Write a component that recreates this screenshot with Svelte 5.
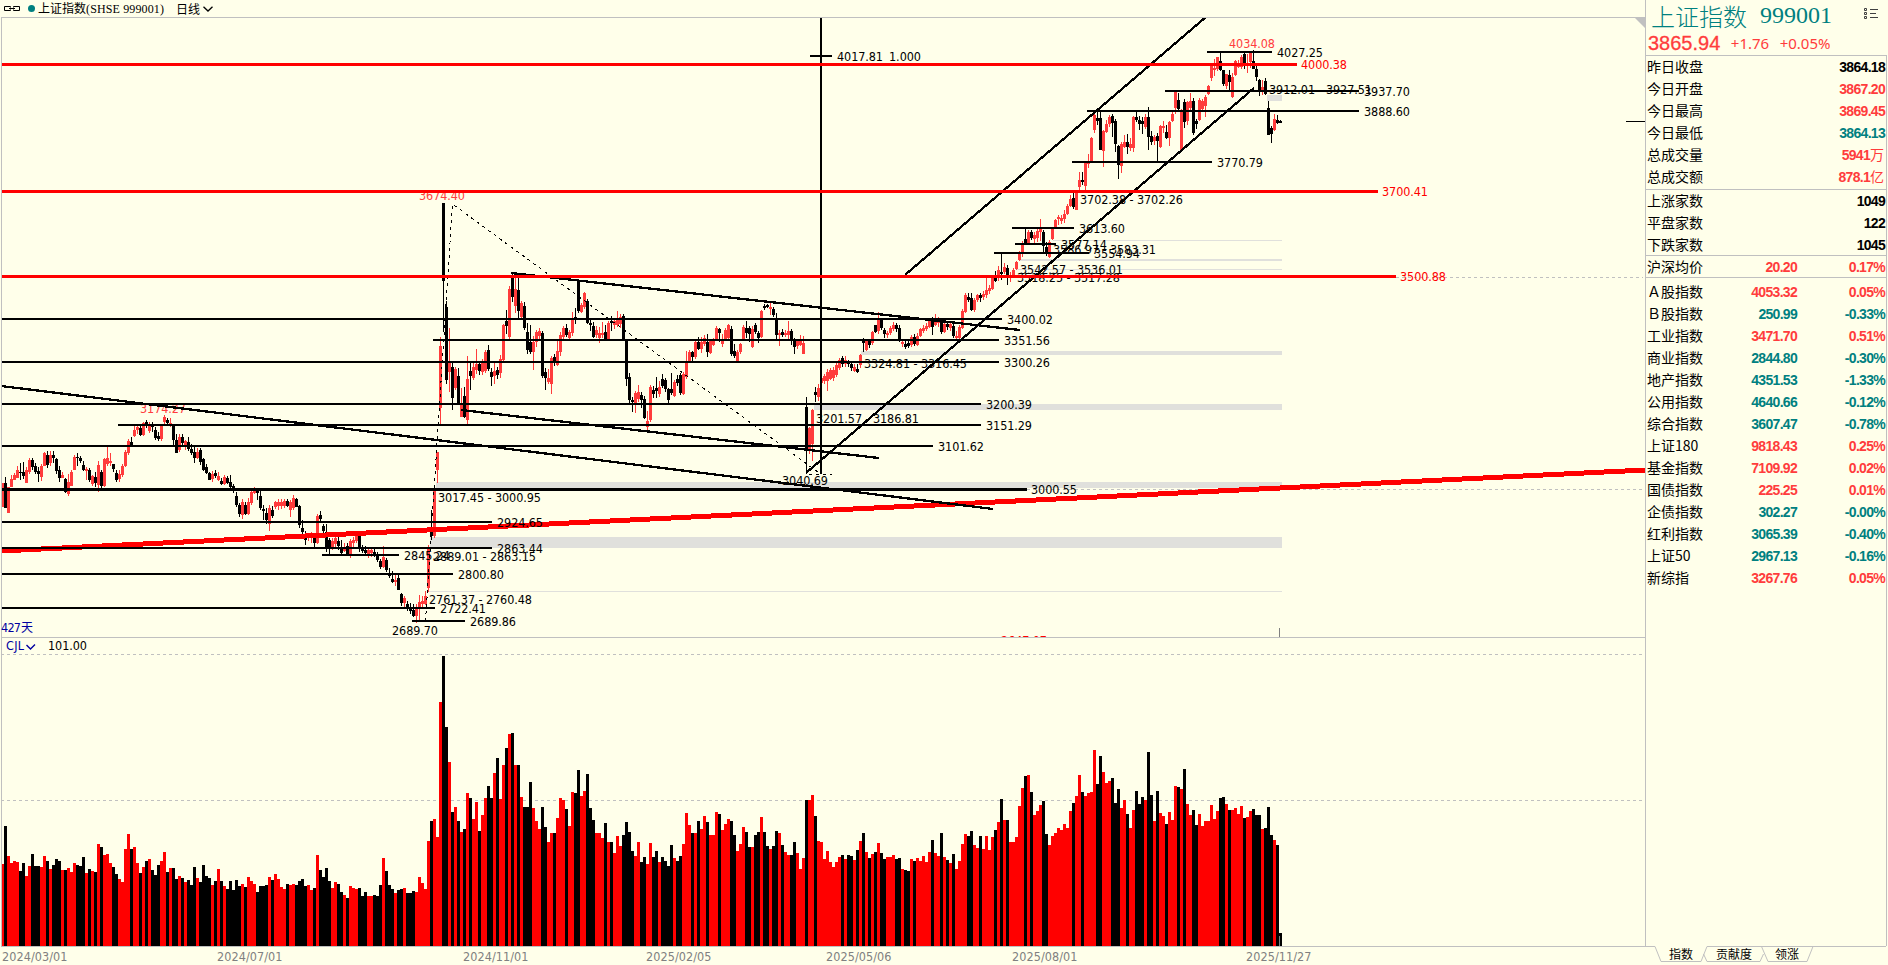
<script lang="ts">
  type Level = { price: string; y: number; from: number; to: number; kind?: string; labelX?: number }

  const STEP = 3

  // One entry per day: high, body top, body bottom, low (in chart rows)
  const candleData = `
    483 483 507 507,477 483 508 508,487 487 513 513,475 479 487 487,473 475 480 480,466 470 478 478,463 472 473 480,462 472 476 479,467 470 483 483,458 460 472 474,
    458 460 467 470,463 466 472 474,467 471 474 482,464 466 477 481,452 453 466 466,451 455 465 468,451 455 463 466,451 455 458 463,458 459 471 474,466 470 478 482,
    472 475 478 478,478 479 492 493,474 482 494 496,470 472 486 486,455 457 470 470,453 457 458 466,456 458 461 463,461 465 470 471,467 469 471 480,468 470 480 482,
    475 476 484 486,472 477 483 487,461 465 485 492,470 472 486 488,458 459 486 487,446 458 464 466,453 461 463 466,464 464 469 472,470 473 480 482,470 474 479 482,
    464 466 475 477,450 452 466 467,439 441 453 455,437 442 446 446,426 430 436 437,425 427 430 434,426 428 435 436,422 423 435 436,420 422 425 428,422 424 431 433,
    422 426 427 432,427 430 438 440,432 436 439 441,424 425 439 441,415 417 422 425,418 420 423 426,418 423 424 427,424 425 440 445,434 440 453 453,434 437 450 452,
    434 437 443 447,440 441 446 450,437 442 449 451,444 449 453 455,447 452 458 463,448 452 458 459,448 450 462 465,458 459 470 471,464 467 473 474,472 473 480 480,
    471 474 479 482,470 473 476 478,472 476 480 481,478 481 484 485,475 477 484 485,476 478 483 484,475 482 487 490,484 486 491 493,492 496 505 507,503 505 514 517,
    499 502 515 519,502 505 514 515,498 502 514 515,490 492 503 505,487 489 493 494,488 490 493 500,490 496 508 510,505 509 511 520,508 513 520 524,505 508 524 531,
    506 510 516 518,501 502 507 509,499 502 506 510,499 502 506 509,499 501 506 508,499 501 506 507,500 502 510 517,495 498 508 510,498 499 507 507,505 506 525 528,
    520 528 532 534,531 534 540 545,533 535 538 541,532 535 538 543,534 537 543 548,514 516 543 544,511 515 519 521,524 526 531 534,524 532 548 552,538 540 549 555,
    538 541 547 550,536 538 544 549,536 541 546 550,540 547 553 556,543 547 551 552,543 546 554 556,539 541 555 558,537 540 543 547,531 533 541 543,533 535 547 552,
    545 548 551 553,546 550 553 556,548 550 554 558,547 550 553 557,549 552 555 557,552 555 560 562,559 561 567 569,546 557 567 568,558 560 570 572,568 573 576 578,
    571 579 582 583,575 580 582 586,574 578 590 590,593 594 603 606,596 598 603 608,601 604 609 611,603 607 611 614,604 610 616 617,604 609 616 623,595 602 609 620,
    596 601 604 607,591 596 604 605,545 548 588 592,510 531 536 540,487 490 536 538,452 452 470 483,337 346 408 424,203 203 281 332,301 307 380 384,328 363 372 392,
    362 367 398 410,367 369 388 390,368 376 403 403,388 403 417 417,387 396 417 418,356 379 420 424,363 371 376 390,363 367 378 380,349 364 370 374,361 364 371 375,
    359 362 372 375,350 352 371 373,345 350 369 371,368 372 377 386,363 371 376 384,367 370 375 379,355 359 373 378,324 325 360 362,310 321 326 334,286 289 337 339,
    272 276 297 302,278 289 306 313,278 290 311 318,301 303 317 319,302 306 328 330,323 332 350 354,325 342 352 354,336 342 352 370,330 332 342 347,328 331 336 340,
    331 333 376 378,368 372 378 390,369 378 382 384,356 358 384 394,354 357 363 366,341 351 365 366,332 335 352 356,326 328 337 341,324 328 335 337,330 332 338 339,
    312 319 333 336,308 317 320 324,279 281 311 313,303 305 312 313,292 293 307 309,299 301 323 324,320 323 325 331,322 326 337 338,326 330 335 338,327 333 338 343,
    322 333 335 338,325 332 339 340,321 323 339 340,316 321 323 331,319 321 325 329,311 319 325 327,314 317 324 328,314 316 339 340,339 341 379 386,373 377 400 403,
    397 400 402 412,391 393 404 413,385 392 399 402,392 395 400 408,396 399 418 419,411 421 427 430,385 387 420 422,386 390 394 398,377 388 391 398,381 387 394 397,
    374 379 386 388,378 380 389 392,388 389 400 403,373 389 393 395,380 382 396 397,375 379 383 386,373 375 393 395,372 374 394 395,351 361 377 379,350 352 362 363,
    351 352 357 362,341 342 357 359,337 342 349 350,337 342 349 353,335 338 344 346,334 342 352 357,340 341 353 354,338 339 345 346,326 328 340 341,328 329 333 342,
    334 341 344 347,328 330 340 341,324 325 338 339,326 329 354 356,344 351 356 358,350 352 361 363,343 344 352 354,325 327 340 341,321 328 333 338,326 328 334 342,
    326 329 347 348,323 325 332 334,331 333 338 343,310 311 337 338,304 306 308 310,304 305 307 308,303 307 309 315,307 309 315 317,313 318 335 339,330 333 335 346,
    329 332 335 337,330 333 335 337,321 331 335 339,329 331 340 345,338 340 347 354,339 341 346 349,335 341 345 346,336 343 354 354,397 407 450 473,427 428 450 454,
    409 410 444 461,387 392 395 402,384 388 397 401,375 378 383 388,374 376 381 384,369 372 381 391,368 370 379 380,367 370 378 381,362 365 375 377,358 360 368 370,
    356 358 364 367,356 360 364 367,360 361 364 367,362 364 368 371,364 367 371 372,364 369 372 373,354 355 365 368,338 339 343 352,340 341 350 351,339 341 345 348,
    331 332 343 345,325 325 332 333,312 319 331 334,318 319 328 330,328 330 334 338,331 333 335 338,326 328 333 335,322 325 329 331,323 325 329 332,325 328 341 342,
    340 342 344 347,341 344 347 349,340 343 346 348,335 337 345 347,334 337 344 346,333 336 345 346,328 329 336 337,325 328 331 333,323 326 329 331,319 321 327 328,
    317 320 327 335,314 318 325 326,317 320 323 327,320 322 332 334,323 324 332 333,321 324 327 330,321 324 328 331,324 326 336 338,331 336 338 339,325 327 338 340,
    309 311 328 329,293 295 312 313,293 297 300 302,293 298 310 311,298 300 310 312,294 295 300 302,293 295 298 302,291 294 297 300,278 290 295 298,285 288 291 294,
    275 277 289 290,271 275 281 282,266 270 278 281,253 272 274 280,263 267 272 274,265 268 276 285,272 275 278 282,268 270 275 277,261 262 269 270,251 252 260 261,
    241 243 252 257,229 239 244 245,230 232 243 244,230 232 238 240,232 235 239 243,229 231 238 242,219 229 232 241,230 232 246 252,242 247 254 256,240 242 257 258,
    227 229 239 240,219 220 228 228,215 217 219 225,215 218 221 224,210 214 219 223,204 206 214 215,195 199 206 207,192 198 207 209,190 192 210 210,172 180 187 190,
    172 180 182 185,161 163 186 190,154 161 164 168,137 138 161 162,112 115 130 133,110 118 121 125,111 118 150 150,130 131 151 167,120 124 132 133,115 117 124 127,
    114 116 123 137,119 121 144 152,145 146 165 179,142 144 166 173,135 142 147 148,134 142 147 154,138 144 148 151,116 117 148 152,111 117 120 122,116 120 124 130,
    117 121 124 134,114 117 127 129,107 117 137 150,131 136 142 145,135 137 141 145,133 136 141 161,125 126 147 148,121 126 128 133,125 132 138 139,121 122 138 146,
    111 114 121 122,91 92 108 114,93 100 109 112,109 110 150 150,99 102 122 128,101 102 121 125,93 101 108 110,98 101 133 135,119 121 124 129,98 100 120 121,
    99 101 109 111,95 97 106 117,85 86 94 95,64 66 78 81,59 68 70 76,57 57 69 71,53 61 70 71,70 70 84 86,74 74 86 89,70 75 82 90,
    73 77 97 98,60 61 75 76,60 63 67 68,55 57 67 69,53 54 64 69,54 63 66 73,53 53 62 68,50 61 69 69,66 69 77 81,79 80 91 96,
    80 87 91 95,78 81 94 95,101 108 135 135,126 128 134 143,114 119 130 131,115 120 123 124,120 121 123 123`

  // r = up day, k = down day, followed by the bar top in thirds of a pixel below row 620
  const volumeData = `
    r732 k618 r708 r729 r723 r726 k753 k729 r768 r738 k702 k738 k738 r741 r708 k723 r747 k735 k717 k723
    r750 k750 r744 r756 r729 k735 k738 k711 r759 k747 r753 k756 r672 k681 r705 r702 r729 k741 k762 r777
    r786 r687 r642 k687 r681 r729 k759 r741 k723 r717 k750 k765 k735 r723 r696 k756 r744 k744 k777 r768
    k774 r786 k780 k795 k741 r774 k786 k735 k768 k774 r795 k783 r747 k783 r798 k807 k783 k810 k780 k798
    r792 k801 r771 r783 r792 k816 k798 k798 k795 r771 k780 r762 r777 r801 r807 k792 r795 r792 k795 k783
    k777 k798 r795 r810 k804 r705 k750 k771 k744 k783 r804 r786 k792 k816 r825 k834 r798 r804 r807 k804
    k828 k816 r828 r828 k825 k828 k795 r714 k753 k795 k807 r819 k810 k807 r804 k819 k819 k813 r816 r771
    r789 r807 r663 k603 r597 r651 r246 k108 k321 r426 k576 r561 k603 r636 k627 r519 k534 r597 r546 k633
    r585 r534 k498 k534 r459 k414 r537 r435 k384 r342 k339 r435 k435 r531 k561 k561 k486 r564 r603 r627
    k561 k621 r666 r639 k639 r594 r534 r540 k567 r618 r516 k519 k450 r528 r513 k462 k564 k600 r639 r639
    r654 k609 r666 k666 r699 r648 r678 k645 k606 k636 k693 r708 r666 k726 k711 r732 r669 k711 k693 r726
    k711 k723 k738 k675 r714 k723 k708 r672 r579 r615 k639 r639 k603 r627 r588 k606 r645 r645 r576 k582
    r630 r612 r597 k603 k645 r693 r672 r621 k636 k681 r681 k645 k636 r591 k636 k678 r687 k678 k633 r639
    k675 r696 r705 k705 k666 r699 r747 r714 k540 r540 r525 k588 r663 r666 r717 r693 r726 r741 r726 r711
    k705 r717 k705 k708 r720 k690 r663 k639 r696 k714 r702 k696 r669 k699 k717 r711 r711 r705 k717 k714
    r747 k750 k753 r717 k723 r714 r723 r708 r726 r696 k660 r699 r708 k639 r711 k720 r729 k702 r747 r723
    r672 r642 k648 k633 r675 r684 k648 r687 r648 r690 r651 k630 r606 k537 r600 k600 r666 r666 r651 r558
    r504 k468 r465 k516 r585 r573 r555 k543 k642 r675 r648 r639 r624 r630 r612 r624 r573 k549 r528 r465
    k516 r528 r519 r516 r390 k492 k408 r456 r489 r483 k474 k549 k507 r564 r540 k582 r624 r570 k513 k552
    k531 r540 k396 k525 r603 k513 r579 r588 k612 r576 r600 r498 k501 r507 k447 r552 r585 k570 k615 r582
    r618 r603 r603 r555 r597 r573 k534 k531 r552 k570 r570 r564 r582 r558 k594 r591 r573 k567 k585 k585
    r627 k624 k561 k645 r660 k675 k939`

  const volumes = volumeData.trim().split(/\s+/).map((v, i) => ({
    x: 1 + i * STEP,
    up: v[0] === 'r',
    top: 620 + Number(v.slice(1)) / 3,
  }))

  const candles = candleData.trim().split(',').map((row, i) => {
    const [high, top, bottom, low] = row.trim().split(' ').map(Number)
    return { x: 1 + i * STEP, high, top, bottom, low, up: volumes[i].up }
  })

  const levels: Level[] = [
    { price: '3400.02', y: 319, from: 1, to: 1002 },
    { price: '3351.56', y: 340, from: 433, to: 999 },
    { price: '3300.26', y: 362, from: 1, to: 999 },
    { price: '3200.39', y: 404, from: 1, to: 981 },
    { price: '3151.29', y: 425, from: 118, to: 981 },
    { price: '3101.62', y: 446, from: 1, to: 933 },
    { price: '3000.55', y: 489.5, from: 1, to: 1027, kind: 'thick', labelX: 1031 },
    { price: '2924.65', y: 522, from: 1, to: 492 },
    { price: '2863.44', y: 548, from: 1, to: 492 },
    { price: '2845.24', y: 555, from: 322, to: 399 },
    { price: '2800.80', y: 574, from: 1, to: 453 },
    { price: '2722.41', y: 608, from: 1, to: 435 },
    { price: '2689.86', y: 621, from: 412, to: 465 },
    { price: '4027.25', y: 52, from: 1207, to: 1272 },
    { price: '3937.70', y: 91, from: 1165, to: 1359 },
    { price: '3888.60', y: 111, from: 1087, to: 1359 },
    { price: '3770.79', y: 162, from: 1072, to: 1212 },
    { price: '3613.60', y: 228, from: 1012, to: 1074 },
    { price: '3577.14', y: 244, from: 1015, to: 1056 },
    { price: '3554.94', y: 253, from: 994, to: 1089 },
    { price: '4000.38', y: 64.5, from: 1, to: 1297, kind: 'red', labelX: 1301 },
    { price: '3700.41', y: 191.5, from: 1, to: 1378, kind: 'red', labelX: 1382 },
    { price: '3500.88', y: 276.5, from: 1, to: 1396, kind: 'red', labelX: 1400 },
  ]

  const gaps = [
    { x: 1267, y: 95, h: 6 },
    { x: 1053, y: 240, h: 1 },
    { x: 1019, y: 259, h: 2 },
    { x: 1016, y: 269, h: 1 },
    { x: 861, y: 351, h: 4 },
    { x: 814, y: 404, h: 6 },
    { x: 436, y: 482, h: 6 },
    { x: 430, y: 537, h: 11 },
    { x: 429, y: 591, h: 1 },
  ]

  const gapLabels = [
    { text: '3912.01 - 3927.51', x: 1269, y: 89 },
    { text: '3702.38 - 3702.26', x: 1080, y: 199 },
    { text: '3586.97 - 3583.31', x: 1053, y: 249 },
    { text: '3542.57 - 3536.01', x: 1020, y: 269 },
    { text: '3518.25 - 3517.28', x: 1017, y: 277 },
    { text: '3324.81 - 3316.45', x: 864, y: 363 },
    { text: '3201.57 - 3186.81', x: 816, y: 418 },
    { text: '3017.45 - 3000.95', x: 438, y: 497 },
    { text: '2889.01 - 2863.15', x: 433, y: 556 },
    { text: '2761.37 - 2760.48', x: 429, y: 599 },
  ]

  const swings = [
    { text: '3674.40', x: 419, y: 195.5, high: true },
    { text: '3174.27', x: 140, y: 408.5, high: true },
    { text: '4034.08', x: 1229, y: 43, high: true },
    { text: '2689.70', x: 392, y: 630.5, high: false },
    { text: '3040.69', x: 782, y: 480.5, high: false },
  ]

  const trends = [
    [1, 386, 993, 509],
    [511, 273, 1020, 330],
    [461, 410, 879, 458],
    [806, 473, 1254, 88],
    [905, 275, 1206, 17],
  ]

  const dates = [
    { text: '2024/03/01', x: 2 },
    { text: '2024/07/01', x: 217 },
    { text: '2024/11/01', x: 463 },
    { text: '2025/02/05', x: 646 },
    { text: '2025/05/06', x: 826 },
    { text: '2025/08/01', x: 1012 },
    { text: '2025/11/27', x: 1246 },
  ]

  // [label, middle value, right value, tone, unit]
  const sections = [
    [
      ['昨日收盘', '', '3864.18', 'flat'],
      ['今日开盘', '', '3867.20', 'up'],
      ['今日最高', '', '3869.45', 'up'],
      ['今日最低', '', '3864.13', 'down'],
      ['总成交量', '', '5941', 'up', '万'],
      ['总成交额', '', '878.1', 'up', '亿'],
    ],
    [
      ['上涨家数', '', '1049', 'flat'],
      ['平盘家数', '', '122', 'flat'],
      ['下跌家数', '', '1045', 'flat'],
    ],
    [['沪深均价', '20.20', '0.17%', 'up']],
    [
      ['Ａ股指数', '4053.32', '0.05%', 'up'],
      ['Ｂ股指数', '250.99', '-0.33%', 'down'],
      ['工业指数', '3471.70', '0.51%', 'up'],
      ['商业指数', '2844.80', '-0.30%', 'down'],
      ['地产指数', '4351.53', '-1.33%', 'down'],
      ['公用指数', '4640.66', '-0.12%', 'down'],
      ['综合指数', '3607.47', '-0.78%', 'down'],
      ['上证180', '9818.43', '0.25%', 'up'],
      ['基金指数', '7109.92', '0.02%', 'up'],
      ['国债指数', '225.25', '0.01%', 'up'],
      ['企债指数', '302.27', '-0.00%', 'down'],
      ['红利指数', '3065.39', '-0.40%', 'down'],
      ['上证50', '2967.13', '-0.16%', 'down'],
      ['新综指', '3267.76', '0.05%', 'up'],
    ],
  ]
</script>

<div class="terminal">
  <main class="main">
    <header class="header">
      <svg class="link" width="16" height="5" viewBox="0 0 16 5">
        <path d="M6.500 1.500V.5H.5v4h6v-1M9.500 1.500V.5h6v4h-6v-1M5 2.500h6" />
      </svg>
      <span class="dot"></span>
      <span class="name">上证指数<span class="code">(SHSE 999001)</span></span>
      <span class="period">日线</span>
      <svg class="chevron" width="10" height="6" viewBox="0 0 10 6"><path d="M.5.7 5 5 9.500.7" /></svg>
    </header>

    <svg class="chart" width="1645" height="948" viewBox="0 17 1645 948">
      <defs>
        <clipPath id="price-pane"><rect x="1" y="17" width="1644" height="620" /></clipPath>
      </defs>

      <g class="grid">
        <path d="M1396 277.5H1643M1027 489.5H1643M1 654.5H1643M1 800.5H1643" />
      </g>

      <g clip-path="url(#price-pane)">
        {#each gaps as g}
          <rect class="gap" x={g.x} y={g.y} width={1282 - g.x} height={g.h} />
        {/each}

        <g class="candles">
          {#each candles as c}
            <g class={c.up ? 'up' : 'down'}>
              <rect x={c.x + 1} y={c.high} width="1" height={c.low - c.high} />
              <rect x={c.x} y={c.top} width="3" height={Math.max(1, c.bottom - c.top)} />
            </g>
          {/each}
        </g>

        {#each swings as s}
          <text class={s.high ? 'soft-red' : ''} x={s.x} y={s.y + 4.5} textLength="46">{s.text}</text>
        {/each}
        {#each gapLabels as l}
          <text x={l.x} y={l.y + 4.5} textLength="103">{l.text}</text>
        {/each}
        <text class="red" x="1001" y="645" textLength="46">2647.07</text>

        <path class="measure" d="M425.500 621 452.500 204 820.500 474M809 474.500H832" />
        <line class="base-trend" x1="1" y1="551" x2="1645" y2="470" />
        {#each trends as [x1, y1, x2, y2]}
          <line class="trend slope" {x1} {y1} {x2} {y2} />
        {/each}
        <path class="trend" d="M821 17V474M810 56H832" />

        {#each levels as l}
          <line class="level {l.kind ?? ''}" x1={l.from} x2={l.to} y1={l.y} y2={l.y} />
          <text class={l.kind === 'red' ? 'red' : ''} x={l.labelX ?? l.to + 5} y={l.y + 4.5} textLength="46">{l.price}</text>
        {/each}
        <text x="837" y="61" textLength="46">4017.81</text>
        <text x="889" y="61" textLength="32">1.000</text>
      </g>

      <g class="volumes">
        {#each volumes as v}
          <rect class={v.up ? 'up' : 'down'} x={v.x} y={v.top} width="3" height={946 - v.top} />
        {/each}
      </g>

      <path class="frame" d="M1 17.500H1645M1.500 17V947M1 637.500H1645M1 946.500H1645" />
      <path class="corner" d="M1634 17H1645V28Z" />
      <path class="cursor" d="M1279.500 628V637M1279.500 936V946" />
      <path class="last" d="M1626 121.500H1645" />

      <text class="blue" x="1" y="632" textLength="20">427</text>
      <text class="blue cjk" x="21" y="632">天</text>
      <text class="blue" x="6" y="650" textLength="18">CJL</text>
      <path class="pick" d="M26.500 645 30.500 649 35 644.500" />
      <text x="48" y="650" textLength="39">101.00</text>

      {#each dates as d}
        <text class="date" x={d.x} y="961" textLength="65.5">{d.text}</text>
      {/each}
    </svg>
  </main>

  <aside class="side">
    <div class="quote">
      <div class="title">
        <span>上证指数</span>
        <span class="title-code">999001</span>
        <svg class="list" width="15" height="12" viewBox="0 0 15 12">
          <path d="M.5.500h2v2h-2zM.5 4.500h2v2h-2zM.5 8.500h2v2h-2zM6 1.500h8M6 5.500h6M6 9.500h8" />
        </svg>
      </div>
      <div class="price">
        <span class="last-price">3865.94</span>
        <span>+1.76</span>
        <span>+0.05%</span>
      </div>
    </div>

    <div class="tables">
      {#each sections as rows}
        <section>
          {#each rows as [label, mid, value, tone, unit]}
            <div class="row {tone}">
              <span class="label">{label}</span>
              <span class="mid">{mid}</span>
              <span class="value">{value}{#if unit}<span class="unit">{unit}</span>{/if}</span>
            </div>
          {/each}
        </section>
      {/each}
    </div>

    <footer class="tabs">
      <svg class="tab-lines" width="242" height="19" viewBox="0 0 242 19">
        <path d="M0 .5H10L16 15.500H56L62 .5H241M58.500 8 62 15.500H115L118.500 8M116.500.500 123 15.500H162L168 .5" />
      </svg>
      <span>指数</span>
      <span>贡献度</span>
      <span>领涨</span>
    </footer>
  </aside>
</div>

<style>
  :global(body) {
    background: #ffffea;
  }

  .terminal {
    display: grid;
    grid-template-columns: 1645px 243px;
    width: 1888px;
    height: 965px;
    overflow: hidden;
    background: #ffffea;
    color: #000;
    font-family: 'Liberation Sans', 'Noto Sans CJK SC', sans-serif;
  }

  .main {
    display: flex;
    flex-direction: column;
  }

  /* ── Header ── */

  .header {
    display: flex;
    align-items: center;
    height: 17px;
    padding-left: 4px;
    font: 12px/17px 'Noto Sans CJK SC', sans-serif;
    white-space: pre;
  }

  .link,
  .chevron,
  .list,
  .tab-lines {
    fill: none;
    stroke: #000;
  }

  .dot {
    width: 7px;
    height: 7px;
    margin: 0 3px 0 8px;
    border-radius: 50%;
    background: #008080;
  }

  .code {
    font: 12px/17px 'Liberation Serif', serif;
    letter-spacing: 0.13px;
  }

  .period {
    margin-left: 12px;
  }

  .chevron {
    margin-left: 3px;
    stroke-width: 1.3;
  }

  /* ── Chart ── */

  .chart {
    display: block;
    flex: none;
    font-family: 'DejaVu Sans Condensed', 'DejaVu Sans', sans-serif;
    font-stretch: condensed;
    font-size: 12.5px;
  }

  .chart rect,
  .chart line,
  .frame,
  .grid,
  .cursor,
  .last,
  .measure,
  .trend {
    shape-rendering: crispEdges;
  }

  .grid path {
    stroke: #c0c0c0;
    stroke-dasharray: 3 3;
  }

  .gap {
    fill: #e0e0dc;
  }

  .candles .up,
  .soft-red {
    fill: #ff3c3c;
  }

  .volumes .up,
  .red {
    fill: #f00;
  }

  .measure {
    fill: none;
    stroke: #000;
    stroke-dasharray: 3 4;
  }

  .trend,
  .level {
    stroke: #000;
    stroke-width: 2;
  }

  .trend.slope {
    stroke-width: 2.3;
  }

  .level.thick {
    stroke-width: 3;
  }

  .level.red {
    stroke: #f00;
    stroke-width: 3;
  }

  .base-trend {
    stroke: #f00;
    stroke-width: 5;
  }

  .frame {
    stroke: #c0c0c0;
  }

  .corner {
    fill: #c0c0c0;
  }

  .cursor {
    stroke: #808080;
  }

  .last {
    stroke: #000;
  }

  .blue {
    fill: #0000a0;
  }

  .cjk {
    font: 12px 'Noto Sans CJK SC', sans-serif;
  }

  .pick {
    fill: none;
    stroke: #0000a0;
    stroke-width: 1.4;
  }

  .date {
    fill: #808080;
  }

  /* ── Quote panel ── */

  .side {
    display: flex;
    flex-direction: column;
  }

  .quote {
    box-sizing: border-box;
    height: 55px;
    border-left: 1px solid #c0c0c0;
  }

  .title {
    display: flex;
    align-items: center;
    height: 31px;
    padding-left: 5px;
    color: #008080;
    font: 300 24px/31px 'Noto Sans CJK SC', sans-serif;
  }

  .title-code {
    margin-left: 13px;
    font: 24px/31px 'Liberation Serif', serif;
  }

  .list {
    margin: 0 0 3px 32px;
    stroke: #404040;
  }

  .price {
    display: flex;
    align-items: center;
    gap: 10.5px;
    height: 24px;
    padding-left: 2px;
    color: #ff3c3c;
    font: 15px/24px 'Noto Sans', sans-serif;
  }

  .last-price {
    font: 20px/24px 'Liberation Sans', sans-serif;
    -webkit-text-stroke: 0.3px #ff3c3c;
  }

  .tables {
    box-sizing: border-box;
    width: 242px;
    height: 891px;
    border: 1px solid #c0c0c0;
    border-bottom: 0;
  }

  section {
    box-sizing: border-box;
    height: 66px;
    border-bottom: 1px solid #c0c0c0;
  }

  section:first-child {
    height: 134px;
  }

  section:nth-child(3) {
    height: 22px;
  }

  section:last-child {
    height: auto;
    padding-top: 3px;
    border: 0;
  }

  .row {
    display: grid;
    grid-template-columns: 69px 81px 1fr;
    height: 22px;
    padding: 0 1px;
    font-size: 14px;
    font-weight: 700;
    line-height: 22px;
    letter-spacing: -0.7px;
    text-align: right;
  }

  .label {
    color: #000;
    font: 14px/21px 'Noto Sans CJK SC', sans-serif;
    letter-spacing: 0;
    text-align: left;
  }

  .unit {
    margin-right: 1px;
    font: 14px/21px 'Noto Sans CJK SC', sans-serif;
    letter-spacing: 0;
  }

  .up {
    color: #ff3c3c;
  }

  .down {
    color: #008080;
  }

  /* ── Bottom tabs ── */

  .tabs {
    position: relative;
    display: flex;
    gap: 23px;
    height: 19px;
    padding-left: 24px;
    font: 12px/15px 'Noto Sans CJK SC', sans-serif;
  }

  .tab-lines {
    position: absolute;
    top: 0;
    left: 0;
    stroke: #c0c0c0;
  }
</style>
